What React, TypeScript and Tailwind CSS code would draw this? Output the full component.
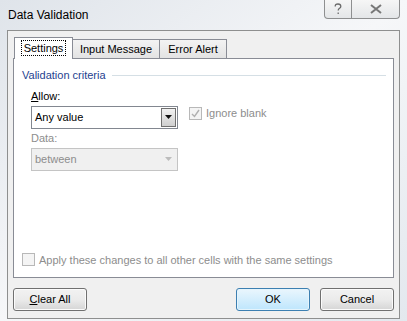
import React from 'react';

const font = { fontFamily: '"Liberation Sans", Arial, sans-serif' };

function Checkbox({ disabled, checked }: { disabled?: boolean; checked?: boolean }) {
  return (
    <span className="w-[13px] h-[13px] border border-[#b8b8b8] bg-[#f4f4f4] flex items-center justify-center shrink-0">
      {checked && (
        <svg width="9" height="9" viewBox="0 0 9 9">
          <path d="M1 5 L3.5 7.5 L8 1" fill="none" stroke={disabled ? '#b0b0b0' : '#333'} strokeWidth="1.4" />
        </svg>
      )}
    </span>
  );
}

function Select({ value, disabled }: { value: string; disabled?: boolean }) {
  return (
    <div
      className={`w-[147px] h-[23px] border flex items-stretch ${
        disabled ? 'border-[#c4c4c4] bg-[#f0f0f0]' : 'border-[#828790] bg-white'
      }`}
    >
      <span className={`flex-1 pl-[3px] flex items-center text-[11px] ${disabled ? 'text-[#8d8d8d]' : 'text-black'}`}>
        {value}
      </span>
      <span
        className={`w-[15px] my-[1px] mr-[1px] flex items-center justify-center ${
          disabled ? '' : 'border border-[#707070] bg-gradient-to-b from-[#f2f2f2] to-[#cfcfcf]'
        }`}
      >
        <svg width="7" height="4" viewBox="0 0 7 4">
          <path d="M0 0 H7 L3.5 4 Z" fill={disabled ? '#bcbcbc' : '#111'} />
        </svg>
      </span>
    </div>
  );
}

function Button({ children, primary }: { children: React.ReactNode; primary?: boolean }) {
  return (
    <button
      className={`w-[74px] h-[23px] rounded-[3px] border text-[11px] text-black flex items-center justify-center ${
        primary
          ? 'border-[#3c7fb1] bg-gradient-to-b from-[#eaf6fd] to-[#bee6fd] shadow-[inset_0_0_0_1px_#e5f4fc]'
          : 'border-[#707070] bg-gradient-to-b from-[#f2f2f2] via-[#ebebeb] to-[#d5d5d5] shadow-[inset_0_0_0_1px_#fbfbfb]'
      }`}
    >
      {children}
    </button>
  );
}

export default function App() {
  return (
    <div
      style={font}
      className="w-[407px] h-[321px] flex flex-col bg-gradient-to-br from-[#dfe4ea] via-[#f6f7f9] to-[#e3e8ee] relative overflow-hidden"
    >
      {/* caption buttons */}
      <div className="absolute top-0 right-[7px] flex h-[19px] border border-t-0 border-[#8e8f90] rounded-b-[4px] bg-gradient-to-b from-[#f6f6f6] to-[#e4e6e8]">
        <span className="w-[27px] border-r border-[#8e8f90] flex items-center justify-center">
          <svg width="8" height="12" viewBox="0 0 8 12">
            <path
              d="M1.2 3.5 C1.2 1.8 2.4 1 4 1 C5.6 1 6.8 1.9 6.8 3.4 C6.8 5.2 4.2 5.4 4.2 7.4 M4.2 9.5 V11"
              fill="none"
              stroke="#6a6a6a"
              strokeWidth="1.3"
            />
          </svg>
        </span>
        <span className="w-[47px] flex items-center justify-center">
          <svg width="12" height="10" viewBox="0 0 12 10">
            <path d="M1 1 L11 9 M11 1 L1 9" stroke="#777" strokeWidth="2" fill="none" />
          </svg>
        </span>
      </div>

      <div className="h-[30px] pl-[8px] flex items-center text-[12px] text-black shrink-0">Data Validation</div>

      <div className="flex-1 mx-[7px] mb-[3px] border border-[#8e8f8f] bg-[#f0f0f0] flex flex-col px-[5px] pt-[5px] pb-[7px]">
        {/* tabs */}
        <div className="flex items-end h-[22px] pl-[1px] relative z-10">
          <div className="w-[59px] h-[22px] border border-b-0 border-[#898c95] bg-white flex items-center justify-center -mb-[1px] pb-[1px]">
            <span className="border border-dotted border-black px-[2px] leading-[14px] text-[11px]">Settings</span>
          </div>
          <div className="w-[87px] h-[19px] border border-b-0 border-l-0 border-[#898c95] bg-gradient-to-b from-[#f3f3f3] to-[#e3e3e3] flex items-center justify-center text-[11px]">
            Input Message
          </div>
          <div className="w-[67px] h-[19px] border border-b-0 border-l-0 border-[#898c95] bg-gradient-to-b from-[#f3f3f3] to-[#e3e3e3] flex items-center justify-center text-[11px]">
            Error Alert
          </div>
        </div>

        {/* tab panel */}
        <div className="h-[220px] border border-[#898c95] bg-white flex flex-col px-[8px] pt-[8px]">
          <div className="flex items-center gap-[6px] text-[11px] text-[#1f3f8f]">
            <span>Validation criteria</span>
            <span className="flex-1 h-px bg-[#d5dfe5] mr-[-1px]" />
          </div>

          <div className="pl-[9px] pt-[4px] flex flex-col">
            <span className="text-[11px] leading-[17px]">
              <u>A</u>llow:
            </span>
            <div className="flex items-center gap-[11px] mt-[1px]">
              <Select value="Any value" />
              <div className="flex items-center gap-[4px] text-[11px] text-[#8d8d8d] -mt-[7px]">
                <Checkbox checked disabled />
                <span>Ignore blank</span>
              </div>
            </div>
            <span className="text-[11px] leading-[17px] text-[#8d8d8d] mt-[1px]">Data:</span>
            <div className="mt-[1px]">
              <Select value="between" disabled />
            </div>
          </div>

          <div className="mt-auto mb-[9px] flex items-center gap-[4px] text-[11px] text-[#8d8d8d]">
            <Checkbox />
            <span>Apply these changes to all other cells with the same settings</span>
          </div>
        </div>

        {/* buttons */}
        <div className="flex items-center mt-[10px]">
          <Button>
            <span>
              <u>C</u>lear All
            </span>
          </Button>
          <div className="flex-1" />
          <Button primary>OK</Button>
          <div className="w-[10px]" />
          <Button>Cancel</Button>
        </div>
      </div>
    </div>
  );
}
